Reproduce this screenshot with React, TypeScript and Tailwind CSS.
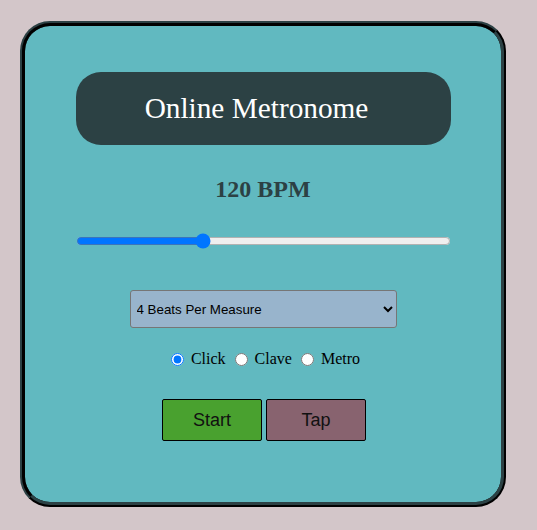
import { useState } from "react";

export default function App() {
  const [bpm, setBpm] = useState(120);
  const [sound, setSound] = useState("click");

  return (
    <div className="min-h-[530px] w-full bg-[#d3c6c9] pt-[21px] pl-[20px]">
      <div className="w-[486px] h-[486px] rounded-[30px] border-[5px] border-[#2c4144] [border-style:ridge] bg-[#61b9c0] flex flex-col items-center">
        <div className="mt-[46px] w-[375px] h-[73px] rounded-[25px] bg-[#2c4144] flex items-center justify-center">
          <h1 className="mr-[13px] font-['Liberation_Serif',serif] text-[29.3px] text-white">Online Metronome</h1>
        </div>

        <h2 className="mt-[30px] h-[28px] leading-[28px] font-['Liberation_Serif',serif] text-[24px] font-bold text-[#2c4144]">
          {bpm} BPM
        </h2>

        <input
          type="range"
          min={40}
          max={280}
          value={bpm}
          onChange={(e) => setBpm(Number(e.target.value))}
          className="mt-[30px] w-[375px] h-[16px] accent-[#0075ff]"
        />

        <select className="mt-[41px] w-[267px] h-[38px] rounded-[3px] border border-[#767676] bg-[#98b4cc] pl-[2px] font-['Liberation_Sans',sans-serif] text-[13.33px] text-black">
          <option>4 Beats Per Measure</option>
          <option>3 Beats Per Measure</option>
          <option>2 Beats Per Measure</option>
        </select>

        <div className="mt-[22px] ml-[4px] h-[18px] flex items-center font-['Liberation_Serif',serif] text-[16px] text-black">
          {["Click", "Clave", "Metro"].map((s) => (
            <label key={s} className="flex items-center">
              <input
                type="radio"
                name="sound"
                checked={sound === s.toLowerCase()}
                onChange={() => setSound(s.toLowerCase())}
                className="ml-[5px] mr-[7px] w-[13px] h-[13px]"
              />
              <span className="mr-[4px]">{s}</span>
            </label>
          ))}
        </div>

        <div className="mt-[31px] ml-[2px] flex gap-[4px]">
          <button className="w-[100px] h-[42px] rounded-[2px] border border-black bg-[#49a12f] font-['Liberation_Sans',sans-serif] text-[18px] text-[#111]">
            Start
          </button>
          <button className="w-[100px] h-[42px] rounded-[2px] border border-black bg-[#88636f] font-['Liberation_Sans',sans-serif] text-[18px] text-[#111]">
            Tap
          </button>
        </div>
      </div>
    </div>
  );
}
